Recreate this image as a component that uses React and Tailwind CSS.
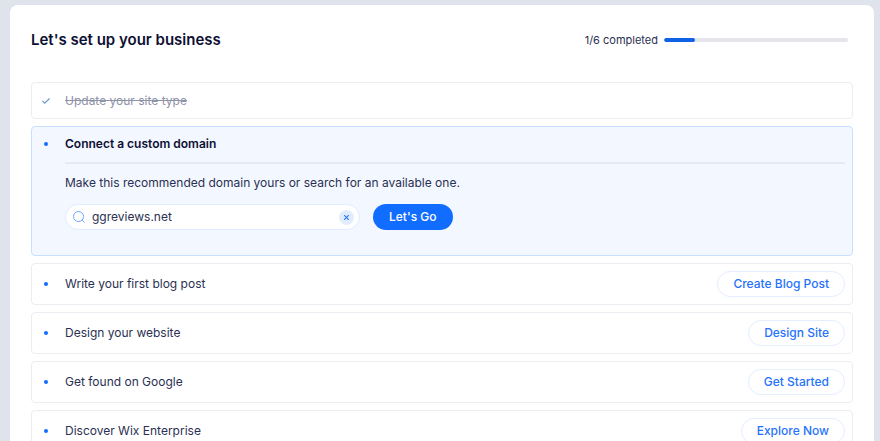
import React, { useState } from 'react'

const TOTAL = 6
const DONE = 1

const TASKS = [
  { title: 'Write your first blog post', action: 'Create Blog Post' },
  { title: 'Design your website', action: 'Design Site' },
  { title: 'Get found on Google', action: 'Get Started' },
  { title: 'Discover Wix Enterprise', action: 'Explore Now' },
]

function Marker({ children }) {
  return <span className="flex w-7 shrink-0 items-center justify-center">{children}</span>
}

function Dot() {
  return <span className="h-1 w-1 rounded-full bg-[#116dff]" />
}

function CheckIcon() {
  return (
    <svg className="h-2 w-2" viewBox="0 0 8 8" fill="none" stroke="#6f9fc8" strokeWidth="1.3">
      <path d="M0.4 4 L2.7 6.2 L7.6 1.4" />
    </svg>
  )
}

function SearchIcon() {
  return (
    <svg className="h-3 w-3 shrink-0" viewBox="0 0 12 12" fill="none" stroke="#6ea6ff" strokeWidth="1">
      <circle cx="5.5" cy="5.5" r="5" />
      <path d="M9 9 L11.6 11.6" />
    </svg>
  )
}

function CloseIcon() {
  return (
    <svg className="h-[5px] w-[5px]" viewBox="0 0 5 5" fill="none" stroke="#2f7cf6" strokeWidth="1.2">
      <path d="M0.1 0.1 L4.9 4.9 M4.9 0.1 L0.1 4.9" />
    </svg>
  )
}

function DomainTask() {
  const [domain, setDomain] = useState('ggreviews.net')

  return (
    <li className="flex gap-[5px] rounded-sm border border-[#c9dffe] bg-[#f3f7ff] pt-[7px] pr-[7px] pb-6">
      <div className="flex h-5">
        <Marker><Dot /></Marker>
      </div>
      <div className="min-w-0 grow">
        <h2 className="font-semibold">Connect a custom domain</h2>
        <hr className="mt-2 border-t-2 border-[#e5eaf3]" />
        <p className="mt-[9px] text-[#2b3052]">
          Make this recommended domain yours or search for an available one.
        </p>
        <form className="mt-[11px] mb-px flex items-center gap-[13px]" onSubmit={e => e.preventDefault()}>
          <div className="flex h-[26px] w-[295px] items-center rounded-full border border-[#e1ecff] bg-white pr-[5px] pl-[7px]">
            <SearchIcon />
            <input
              aria-label="Domain"
              className="ml-[7px] min-w-0 grow bg-transparent text-[#2b3052] outline-none"
              value={domain}
              onChange={e => setDomain(e.target.value)}
            />
            <button
              type="button"
              aria-label="Clear"
              className="flex h-[15px] w-[15px] shrink-0 items-center justify-center rounded-full bg-[#e1edff]"
              onClick={() => setDomain('')}
            >
              <CloseIcon />
            </button>
          </div>
          <button type="submit" className="h-[26px] rounded-full bg-[#116dff] px-4 font-medium text-white">
            Let's Go
          </button>
        </form>
      </div>
    </li>
  )
}

export default function App() {
  return (
    <div className="h-screen overflow-hidden bg-[#dfe3eb] pt-[5px] pr-[6px] pl-[10px] font-[Inter,sans-serif] text-xs leading-5 text-[#0d0f33]">
      <main className="rounded-lg bg-white px-[21px] pb-6">
        <header className="flex h-[77px] items-start justify-between pt-6 pr-[5px]">
          <h1 className="text-[15px] leading-[22px] font-semibold">Let's set up your business</h1>
          <div className="flex h-[22px] items-center gap-[6px]">
            <span className="text-[11px] text-[#2b3052]">{DONE}/{TOTAL} completed</span>
            <div className="h-1 w-[184px] overflow-hidden rounded-full bg-[#e5e6e9]">
              <div className="h-full rounded-full bg-[#0f62e6]" style={{ width: `${(DONE / TOTAL) * 100}%` }} />
            </div>
          </div>
        </header>

        <ul className="flex flex-col gap-[7px]">
          <li className="flex h-[37px] items-center gap-[5px] rounded-sm border border-[#eaedf2]">
            <Marker><CheckIcon /></Marker>
            <span className="text-[#8f93a8] line-through">Update your site type</span>
          </li>
          <DomainTask />
          {TASKS.map(task => (
            <li key={task.title} className="flex h-[42px] items-center gap-[5px] rounded-sm border border-[#eaedf2] pr-[7px]">
              <Marker><Dot /></Marker>
              <span className="grow text-[#2b3052]">{task.title}</span>
              <button type="button" className="h-[26px] rounded-full border border-[#e4eeff] px-[15px] font-medium text-[#2672fb]">
                {task.action}
              </button>
            </li>
          ))}
        </ul>
      </main>
    </div>
  )
}
